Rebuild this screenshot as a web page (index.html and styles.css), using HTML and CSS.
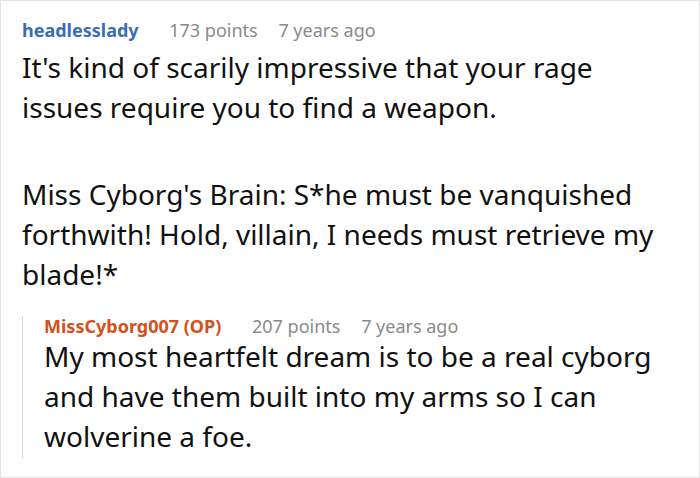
FILE: index.html
```html
<!DOCTYPE html>
<html lang="en">
<head>
    <meta charset="UTF-8">
    <title>Comments</title>
    <link rel="stylesheet" href="styles.css">
</head>
<body>
    <div class="thread">
        <div class="comment">
            <div class="meta">
                <span class="author">headlesslady</span>
                <span class="points">173 points</span>
                <span class="age">7 years ago</span>
            </div>
            <p class="text">It's kind of scarily impressive that your rage issues require you to find a weapon.</p>
            <p class="text para">Miss Cyborg's Brain: S*he must be vanquished forthwith! Hold, villain, I needs must retrieve my blade!*</p>

            <div class="reply">
                <div class="meta">
                    <span class="author op">MissCyborg007 (OP)</span>
                    <span class="points">207 points</span>
                    <span class="age">7 years ago</span>
                </div>
                <p class="text">My most heartfelt dream is to be a real cyborg and have them built into my arms so I can wolverine a foe.</p>
            </div>
        </div>
    </div>
</body>
</html>
```

FILE: styles.css
```css
html, body {
    margin: 0;
    padding: 0;
    background: #fff;
}
body {
    font-family: "Noto Sans", "Open Sans", sans-serif;
    color: #111;
}
.thread {
    box-sizing: border-box;
    width: 700px;
    height: 478px;
    border: 1px solid #e2e2e2;
    padding: 19px 40px 0 21px;
    overflow: hidden;
}
.meta {
    font-size: 18px;
    line-height: 20px;
    color: #8a8a8a;
}
.author {
    font-weight: bold;
    color: #3a6db5;
    margin-right: 26px;
}
.author.op {
    color: #d4501c;
}
.points {
    margin-right: 16px;
}
.text {
    margin: 7px 0 0;
    font-size: 28px;
    line-height: 40px;
}
.text.para {
    margin-top: 47px;
}
.reply {
    margin-top: 31px;
    border-left: 1px solid #dcdcdc;
    padding: 0 0 3px 21px;
}
.reply .meta {
    margin-top: -9px;
}
.reply .text {
    margin-top: 0;
}
```
